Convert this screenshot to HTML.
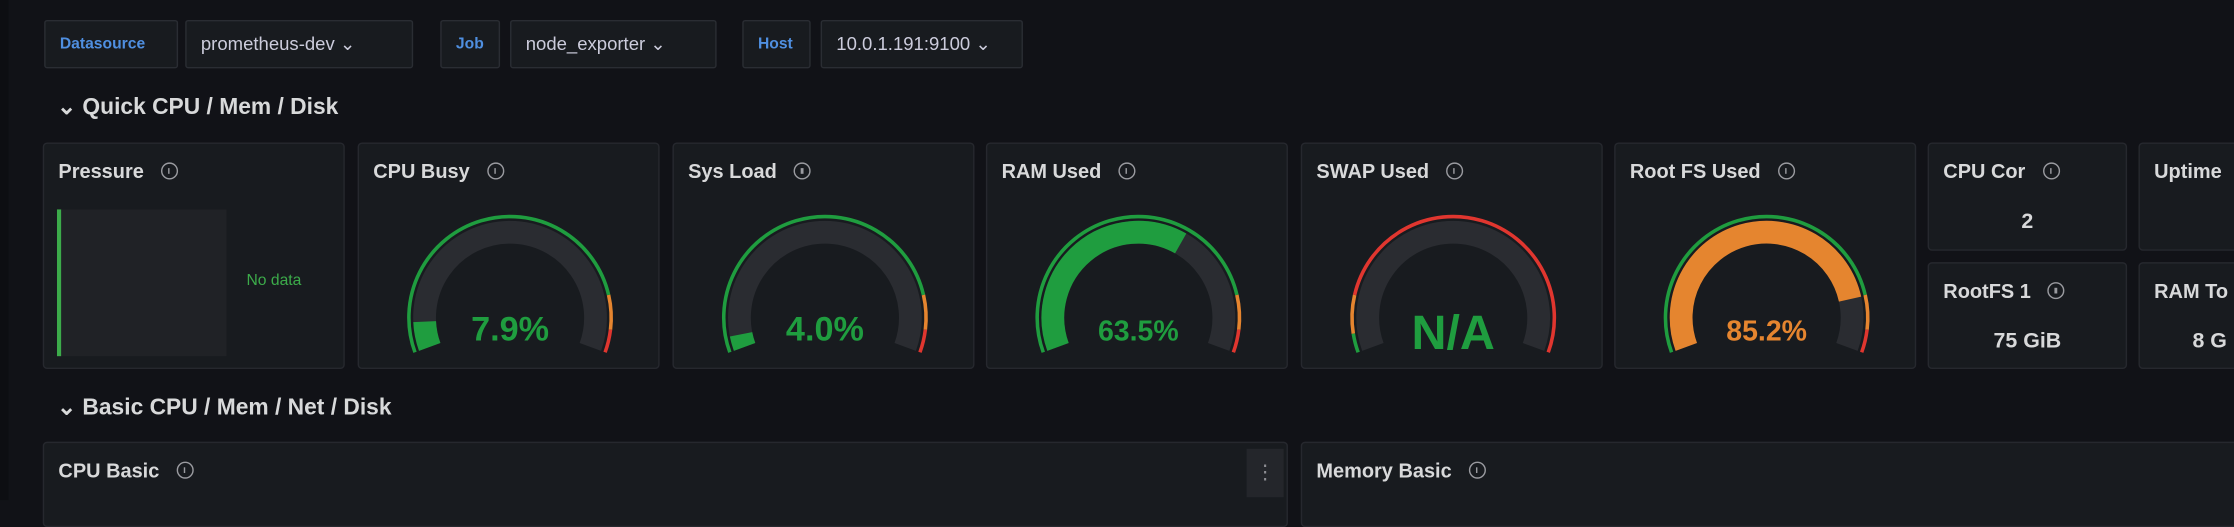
<!DOCTYPE html>
<html><head><meta charset="utf-8">
<style>
html,body{margin:0;padding:0;background:#111217;width:2234px;height:500px;overflow:hidden}
#w{position:absolute;left:0;top:0;width:1568px;height:351px;transform:scale(1.4247);transform-origin:0 0;font-family:"Liberation Sans",sans-serif;color:#d8d9da}
.a{position:absolute;box-sizing:border-box}
.chip{background:#181b1f;border:1px solid #2a2d33;border-radius:2px;font-size:13px;line-height:32px;padding:0 10px;color:#ccccdc;white-space:nowrap}
.lbl{color:#4f8fe0;font-size:11px;font-weight:bold}
.p{background:#181b1f;border:1px solid #26282e;border-radius:3px;overflow:hidden}
.t{position:absolute;left:10px;top:11px;font-size:14px;font-weight:bold;color:#d8d9da;white-space:nowrap}
.i{display:inline-block;width:10px;height:10px;border:1.3px solid #9a9ba0;border-radius:50%;margin-left:12px;vertical-align:-1px;position:relative}
.i:after{content:"";position:absolute;left:4px;top:3px;width:1.3px;height:4px;background:#9a9ba0}
.h{font-size:16px;font-weight:bold;color:#d8d9da}
.v{position:absolute;left:0;right:0;text-align:center;font-weight:bold;color:#d8d9da;font-size:15px}
</style></head><body>
<div id="w">
<div class="a" style="left:0;top:0;width:6px;height:351px;background:#0d0e12"></div>
<div class="a chip lbl" style="left:31px;top:14px;width:94px;height:34px">Datasource</div>
<div class="a chip" style="left:130px;top:14px;width:160px;height:34px">prometheus-dev ⌄</div>
<div class="a chip lbl" style="left:309px;top:14px;width:42px;height:34px">Job</div>
<div class="a chip" style="left:358px;top:14px;width:145px;height:34px">node_exporter ⌄</div>
<div class="a chip lbl" style="left:521px;top:14px;width:48px;height:34px">Host</div>
<div class="a chip" style="left:576px;top:14px;width:142px;height:34px">10.0.1.191:9100 ⌄</div>
<div class="a h" style="left:40px;top:65px">⌄ Quick CPU / Mem / Disk</div>
<div class="a h" style="left:40px;top:276px">⌄ Basic CPU / Mem / Net / Disk</div>

<div class="a p" style="left:30px;top:100px;width:212px;height:159px"><div class="t">Pressure<span class="i"></span></div>
<div class="a" style="left:9px;top:46px;width:3px;height:103px;background:#3cab4a"></div>
<div class="a" style="left:12px;top:46px;width:116px;height:103px;background:#202226"></div>
<div class="a" style="left:142px;top:90px;font-size:11px;color:#3cab4a">No data</div></div>

<div class="a p" id="g1" style="left:251px;top:100px;width:212px;height:159px"><div class="t">CPU Busy<span class="i"></span></div></div>
<div class="a p" id="g2" style="left:472px;top:100px;width:212px;height:159px"><div class="t">Sys Load<span class="i"></span></div></div>
<div class="a p" id="g3" style="left:692px;top:100px;width:212px;height:159px"><div class="t">RAM Used<span class="i"></span></div></div>
<div class="a p" id="g4" style="left:913px;top:100px;width:212px;height:159px"><div class="t">SWAP Used<span class="i"></span></div></div>
<div class="a p" id="g5" style="left:1133px;top:100px;width:212px;height:159px"><div class="t">Root FS Used<span class="i"></span></div></div>

<div class="a p" style="left:1353px;top:100px;width:140px;height:76px"><div class="t">CPU Cor<span class="i"></span></div><div class="v" style="top:46px">2</div></div>
<div class="a p" style="left:1353px;top:184px;width:140px;height:75px"><div class="t">RootFS 1<span class="i"></span></div><div class="v" style="top:46px">75 GiB</div></div>
<div class="a p" style="left:1501px;top:100px;width:80px;height:76px"><div class="t">Uptime</div></div>
<div class="a p" style="left:1501px;top:184px;width:80px;height:75px"><div class="t">RAM To</div><div class="v" style="top:46px;left:20px">8 G</div></div>

<div class="a p" style="left:30px;top:310px;width:874px;height:60px"><div class="t">CPU Basic<span class="i"></span></div>
<div class="a" style="left:844px;top:4px;width:26px;height:34px;background:#24262b;color:#8e8e94;text-align:center;line-height:32px;font-size:14px">⋮</div></div>
<div class="a p" style="left:913px;top:310px;width:670px;height:60px"><div class="t">Memory Basic<span class="i"></span></div></div>
</div>
<script>
function pt(r,a){a=a*Math.PI/180;return [r*Math.cos(a),-r*Math.sin(a)];}
function arc(r,f0,f1,col,w){var a0=200-220*f0,a1=200-220*f1;var p=pt(r,a0),q=pt(r,a1);var lg=(a0-a1)>180?1:0;
return '<path d="M'+p[0].toFixed(2)+' '+p[1].toFixed(2)+' A'+r+' '+r+' 0 '+lg+' 1 '+q[0].toFixed(2)+' '+q[1].toFixed(2)+'" stroke="'+col+'" stroke-width="'+w+'" fill="none"/>';}
var G='#1f9d3f',O='#e5852f',R='#e0362f';
var defs=[
 ['g1',0.079,[[0,0.85,G],[0.85,0.94,O],[0.94,1,R]],'7.9%',G,24],
 ['g2',0.04,[[0,0.85,G],[0.85,0.94,O],[0.94,1,R]],'4.0%',G,24],
 ['g3',0.635,[[0,0.85,G],[0.85,0.94,O],[0.94,1,R]],'63.5%',G,20],
 ['g4',0,[[0,0.05,G],[0.05,0.15,O],[0.15,1,R]],'N/A',G,34],
 ['g5',0.852,[[0,0.85,G],[0.85,0.94,O],[0.94,1,R]],'85.2%',O,20]];
defs.forEach(function(d){var s='<svg width="212" height="159" style="position:absolute;left:0;top:0" viewBox="-106 -122 212 159">';
s+=arc(60,0,1,'#2a2c31',16);
if(d[1]>0)s+=arc(60,0,d[1],d[4]==O?O:G,16);
d[2].forEach(function(t){s+=arc(71,t[0],t[1],t[2],2.5);});
s+='<text x="0" y="'+(d[5]>30?22:16)+'" text-anchor="middle" font-family="Liberation Sans,sans-serif" font-weight="bold" font-size="'+d[5]+'" fill="'+d[4]+'">'+d[3]+'</text></svg>';
document.getElementById(d[0]).insertAdjacentHTML('beforeend',s);});
</script>
</body></html>
